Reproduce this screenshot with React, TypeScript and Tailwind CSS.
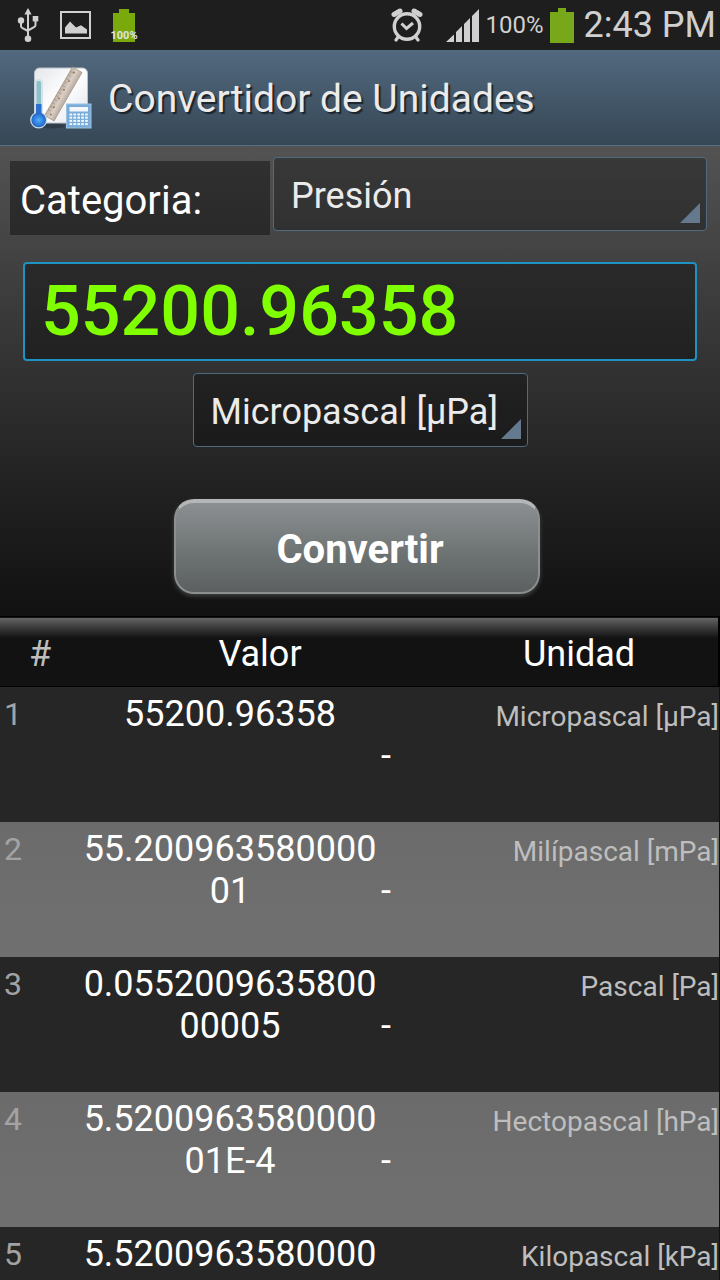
import { useState } from "react";

const results = [
  { id: 1, value: "55200.96358", unit: "Micropascal [µPa]" },
  { id: 2, value: "55.20096358000001", unit: "Milípascal [mPa]" },
  { id: 3, value: "0.055200963580000005", unit: "Pascal [Pa]" },
  { id: 4, value: "5.520096358000001E-4", unit: "Hectopascal [hPa]" },
  { id: 5, value: "5.520096358000001E-5", unit: "Kilopascal [kPa]" },
];

function UsbIcon() {
  return (
    <svg className="h-9 w-6" viewBox="0 0 24 36" fill="none" stroke="#d0d0d0" strokeWidth="2">
      <path d="M12 6V31" />
      <path d="M5 14v5q0 1.500 1.500 2.200l5.500 2.800M19.500 13v5q0 1.500-1.500 2.200l-6 3.300" />
      <path d="M12 1l3.600 6.500H8.400z" fill="#d0d0d0" stroke="none" />
      <circle cx="5" cy="13.500" r="3.200" fill="#d0d0d0" stroke="none" />
      <rect x="16.700" y="9" width="5.600" height="5.400" fill="#d0d0d0" stroke="none" />
      <circle cx="12" cy="31.700" r="3.300" fill="#d0d0d0" stroke="none" />
    </svg>
  );
}

function PictureIcon() {
  return (
    <svg className="h-7 w-[31px]" viewBox="0 0 31 28">
      <rect x="1" y="1" width="29" height="26" fill="none" stroke="#d0d0d0" strokeWidth="2" />
      <path d="M5 22.500V16.500l5-6 6 6 5-2.300 6 4.300v4z" fill="#d0d0d0" />
    </svg>
  );
}

function AlarmIcon() {
  return (
    <svg className="h-[34px] w-8" viewBox="0 0 32 34" fill="none" stroke="#d0d0d0">
      <circle cx="16" cy="18.500" r="12.700" strokeWidth="3.400" />
      <path d="M3 6.500L9 3M29 6.500L23 3" strokeWidth="5" strokeLinecap="round" />
      <path d="M7.500 28.500L5 32M24.500 28.500l2.500 3.500" strokeWidth="3.200" strokeLinecap="round" />
      <path d="M10.500 15.500l5 5 6.500-5.500" strokeWidth="3" />
    </svg>
  );
}

function SignalIcon() {
  return (
    <svg className="h-[33px] w-[33px]" viewBox="0 0 33 33" fill="#d0d0d0">
      <path d="M0 33L8 25.500V33zM10 33V23l6-6v16zM18 33V15l6-6v24zM26 33V7l7-7v33z" />
    </svg>
  );
}

function AppIcon() {
  const keys = [0, 1, 2, 3, 4];
  return (
    <svg className="h-16 w-16" viewBox="0 0 64 64">
      <defs>
        <linearGradient id="card" x1="0" y1="0" x2="1" y2="1">
          <stop offset="0" stopColor="#e4e6ea" />
          <stop offset="0.5" stopColor="#ffffff" />
          <stop offset="1" stopColor="#dfe2ea" />
        </linearGradient>
        <radialGradient id="bulb" cx="0.5" cy="0.5" r="0.5">
          <stop offset="0" stopColor="#4bb0ff" />
          <stop offset="1" stopColor="#2563c4" />
        </radialGradient>
        <linearGradient id="wood" x1="0" y1="0" x2="1" y2="0">
          <stop offset="0" stopColor="#bdb0a4" />
          <stop offset="0.5" stopColor="#d9cfc6" />
          <stop offset="1" stopColor="#b8aca1" />
        </linearGradient>
      </defs>
      <ellipse cx="22" cy="60" rx="13" ry="2.500" fill="#26323d" opacity="0.6" />
      <rect x="4.500" y="2" width="53" height="55" rx="5" fill="url(#card)" stroke="#b9c2cc" />
      <g transform="translate(42.500 1) rotate(30)">
        <rect x="0" y="0" width="11" height="56" fill="url(#wood)" stroke="#a89582" strokeWidth="0.700" />
        <path
          d="M0 5h4M0 9h3M0 13h4M0 17h3M0 21h4M0 25h3M0 29h4M0 33h3M0 37h4M0 41h3M0 45h4M0 49h3"
          stroke="#a08c7c"
          strokeWidth="0.600"
        />
        <g fill="#9a6a48">
          <circle cx="4" cy="4" r="0.900" />
          <circle cx="4" cy="14" r="0.900" />
          <circle cx="4" cy="24" r="0.900" />
          <circle cx="4" cy="34" r="0.900" />
          <circle cx="4" cy="44" r="0.900" />
          <circle cx="5" cy="52" r="0.900" />
        </g>
      </g>
      <rect x="4.500" y="13" width="8.500" height="36" rx="4" fill="#cfe3e8" />
      <rect x="6.500" y="15" width="4.500" height="26" rx="2" fill="#8fc0ca" />
      <circle cx="8.700" cy="54" r="8.600" fill="#c4dbea" />
      <rect x="6" y="38" width="5.500" height="12" fill="#2c6fd0" />
      <circle cx="8.700" cy="54" r="7.300" fill="url(#bulb)" />
      <rect x="36.500" y="38" width="24.500" height="24" fill="#79acd8" stroke="#9cc3e4" />
      <rect x="39.500" y="41" width="18.500" height="4.500" fill="#f3f7fb" />
      <g fill="#f3f7fb">
        {keys.map((c) => (
          <g key={c}>
            <rect x={39.5 + c * 3.9} y="47.500" width="2.700" height="2" />
            <rect x={39.5 + c * 3.9} y="50.700" width="2.700" height="2" />
            <rect x={39.5 + c * 3.9} y="53.900" width="2.700" height="2" />
            <rect x={39.5 + c * 3.9} y="57.100" width="2.700" height="2" />
          </g>
        ))}
      </g>
    </svg>
  );
}

function SpinnerCorner() {
  return (
    <svg className="pointer-events-none absolute right-[7px] bottom-2 size-5" viewBox="0 0 20 20">
      <path d="M20 0v20H0z" fill="#64788e" />
    </svg>
  );
}

const spinner =
  "h-[74px] w-full appearance-none rounded border border-[#4f6b80] bg-black/30 pt-1 pl-[17px] text-4xl text-[#ebebeb] outline-none";

export default function App() {
  const [amount, setAmount] = useState("55200.96358");

  return (
    <div className="flex h-screen flex-col overflow-hidden bg-[#111111] font-['Roboto',sans-serif] text-white">
      <div className="flex h-[50px] shrink-0 items-center justify-between bg-[#1e1e1e] pr-1 pl-4 text-[#d0d0d0]">
        <div className="flex items-center gap-5">
          <UsbIcon />
          <PictureIcon />
          <div className="relative ml-0.5 h-[33px] w-[22px]">
            <svg className="h-[33px] w-[22px]" viewBox="0 0 22 33">
              <path d="M6 0h10v4h6v29H0V4h6z" fill="#7aa90b" />
            </svg>
            <span className="absolute bottom-0 left-1/2 -translate-x-1/2 text-[11px] leading-3 font-bold text-[#e2e2e2]">
              100%
            </span>
          </div>
        </div>
        <div className="flex items-center">
          <AlarmIcon />
          <div className="ml-[23px] flex items-center gap-1.5">
            <SignalIcon />
            <span className="text-2xl">100%</span>
            <svg className="h-[35px] w-6" viewBox="0 0 24 35">
              <path d="M8 0h8v4h8v31H0V4h8z" fill="#77a81a" />
            </svg>
          </div>
          <span className="ml-2.5 text-4xl">2:43 PM</span>
        </div>
      </div>

      <header className="flex h-24 shrink-0 items-center gap-3.5 border-b border-[#56707f] bg-linear-to-b from-[#52697f] to-[#364755] pl-[30px]">
        <AppIcon />
        <h1 className="pt-1 text-[39px] text-[#ebebeb] [text-shadow:2px_2px_1px_#1b242c]">Convertidor de Unidades</h1>
      </header>

      <main className="flex min-h-0 flex-1 flex-col">
        <form
          className="flex shrink-0 flex-col items-center bg-linear-to-b from-[#535353] to-[#111111] pt-[11px] pb-[22px]"
          onSubmit={(e) => e.preventDefault()}
        >
          <div className="flex w-full gap-[3px] pr-[13px] pl-2.5">
            <label
              htmlFor="category"
              className="mt-1 flex h-[74px] w-[260px] items-center bg-black/40 pt-1.5 pl-2.5 text-[40px]"
            >
              Categoria:
            </label>
            <div className="relative h-[74px] flex-1">
              <select id="category" className={spinner}>
                <option>Presión</option>
              </select>
              <SpinnerCorner />
            </div>
          </div>

          <div className="mt-[27px] w-full px-[23px]">
            <input
              aria-label="Valor"
              inputMode="decimal"
              value={amount}
              onChange={(e) => setAmount(e.target.value)}
              className="h-[99px] w-full rounded border-2 border-[#1c93c2] bg-black/35 pl-4 text-[70px] font-medium text-[#80ff00] outline-none"
            />
          </div>

          <div className="relative mt-3 h-[74px] w-[335px]">
            <select aria-label="Unidad" className={spinner}>
              {results.map((r) => (
                <option key={r.id}>{r.unit}</option>
              ))}
            </select>
            <SpinnerCorner />
          </div>

          <button
            type="submit"
            className="mt-[52px] mr-1.5 h-[95px] w-[366px] rounded-[20px] border-2 border-t-4 border-[#8b8f8f] border-t-[#b4b6b7] bg-linear-to-b from-[#8c8f92] via-[#6c7272] via-60% to-[#5c6060] pt-1 pl-1.5 text-[40px] font-bold shadow-[0_2px_4px_#404343]"
          >
            Convertir
          </button>
        </form>

        <div className="min-h-0 flex-1 overflow-y-auto [scrollbar-width:none]">
          <table className="w-full table-fixed border-collapse">
            <colgroup>
              <col className="w-20" />
              <col className="w-[300px]" />
              <col className="w-[60px]" />
              <col />
            </colgroup>
            <thead>
              <tr className="h-[70px] border-y border-r-2 border-black bg-linear-to-b from-[#646464] to-[#121212] to-30% text-4xl">
                <th className="pt-1 font-normal text-[#bebebe]">#</th>
                <th colSpan={2} className="pt-1 font-normal">
                  Valor
                </th>
                <th className="pt-1 font-normal">Unidad</th>
              </tr>
            </thead>
            <tbody>
              {results.map((r) => (
                <tr
                  key={r.id}
                  className="h-[135px] bg-[#262626] align-top even:bg-linear-to-b even:from-[#6b6b6b] even:to-[#707070]"
                >
                  <td className="pt-[7px] pl-1 text-[32px] leading-10 text-[#a3a3a3]">{r.id}</td>
                  <td className="pt-1.5 text-center text-4xl leading-[42px] break-all">{r.value}</td>
                  <td className="pt-12 pl-px text-4xl leading-[42px]">-</td>
                  <td className="pt-3 text-right text-[28px] leading-9 whitespace-nowrap text-[#bebebe]">{r.unit}</td>
                </tr>
              ))}
            </tbody>
          </table>
        </div>
      </main>
    </div>
  );
}
